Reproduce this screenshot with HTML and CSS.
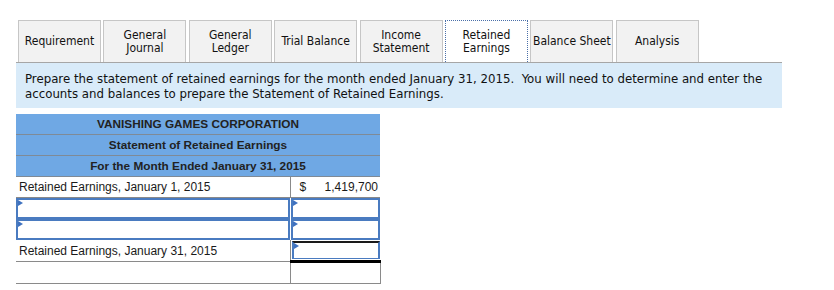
FILE: index.html
```html
<!DOCTYPE html>
<html>
<head>
<meta charset="utf-8">
<link rel="stylesheet" href="styles.css">
</head>
<body>
<div class="page">
  <div class="tabs">
    <div class="tab">Requirement</div>
    <div class="tab">General<br>Journal</div>
    <div class="tab">General<br>Ledger</div>
    <div class="tab">Trial Balance</div>
    <div class="tab">Income<br>Statement</div>
    <div class="tab active">Retained<br>Earnings</div>
    <div class="tab">Balance Sheet</div>
    <div class="tab">Analysis</div>
  </div>
  <div class="instructions">Prepare the statement of retained earnings for the month ended January 31, 2015.&nbsp; You will need to determine and enter the accounts and balances to prepare the Statement of Retained Earnings.</div>
  <table class="stmt">
    <colgroup><col class="c1"><col class="c2"></colgroup>
    <tr class="hdr"><td colspan="2">VANISHING GAMES CORPORATION</td></tr>
    <tr class="hdr"><td colspan="2">Statement of Retained Earnings</td></tr>
    <tr class="hdr"><td colspan="2">For the Month Ended January 31, 2015</td></tr>
    <tr class="row">
      <td class="label">Retained Earnings, January 1, 2015</td>
      <td class="amt"><span class="cur">$</span><span class="num">1,419,700</span></td>
    </tr>
    <tr class="inrow">
      <td><div class="field left"><span class="tri"></span></div></td>
      <td><div class="field right"><span class="tri"></span></div></td>
    </tr>
    <tr class="inrow">
      <td><div class="field left"><span class="tri"></span></div></td>
      <td><div class="field right"><span class="tri"></span></div></td>
    </tr>
    <tr class="row total">
      <td class="label">Retained Earnings, January 31, 2015</td>
      <td class="totcell"><div class="field right tot"><span class="tri"></span></div></td>
    </tr>
    <tr class="row last">
      <td></td>
      <td class="amt"></td>
    </tr>
  </table>
</div>
</body>
</html>
```
FILE: styles.css
```css
html, body {
  margin: 0;
  padding: 0;
  background: #ffffff;
}
.page {
  padding: 20px 0 0 16px;
  width: 766px;
}
.tabs {
  display: flex;
  gap: 2.4px;
  padding-left: 2px;
  border-bottom: 1px solid #a6a6a6;
}
.tab {
  box-sizing: border-box;
  width: 83px;
  height: 42px;
  border: 1px solid #c6c6c6;
  border-bottom: none;
  background: #f2f2f2;
  display: flex;
  align-items: center;
  justify-content: center;
  text-align: center;
  font-family: "DejaVu Sans Condensed", "DejaVu Sans", sans-serif;
  font-size: 12px;
  line-height: 13px;
  color: #111;
}
.tab.active {
  background: #ffffff;
  border: 1px dotted #4a6fa8;
  border-bottom: none;
}
.instructions {
  background: #d9ebf9;
  padding: 8px 9px 7px 9px;
  font-family: "DejaVu Sans Condensed", "DejaVu Sans", sans-serif;
  font-size: 13.1px;
  line-height: 15px;
  color: #111;
}
.stmt {
  margin-top: 6px;
  border-collapse: collapse;
  table-layout: fixed;
  width: 364px;
  font-family: "Liberation Sans", Arial, sans-serif;
  font-size: 12px;
  color: #1a1a1a;
}
.c1 { width: 274px; }
.c2 { width: 90px; }
.stmt td {
  padding: 0;
  height: 20px;
}
.hdr td {
  background: #6fa8e4;
  text-align: center;
  font-weight: bold;
  font-size: 11.8px;
  color: #222;
  border-bottom: 1px solid #7f8a96;
}
.row td {
  border-bottom: 1px solid #8a8a8a;
}
.label {
  padding-left: 3px !important;
}
.amt {
  border-left: 1px solid #8a8a8a;
}
.amt .cur {
  float: left;
  padding-left: 9px;
}
.amt .num {
  float: right;
  padding-right: 2px;
}
.inrow td {
  height: 21px;
}
.field {
  box-sizing: border-box;
  height: 21px;
  border: 2px solid #4a7bc0;
  position: relative;
  background: #fff;
}
.field.right {
  margin-left: 1px;
}
.tri {
  position: absolute;
  left: 0;
  top: 0;
  width: 0;
  height: 0;
  border-top: 3px solid transparent;
  border-bottom: 3px solid transparent;
  border-left: 5px solid #3f72c0;
}
.total td.totcell {
  border-left: 1px solid #8a8a8a;
  border-bottom: 3px solid #000;
}
.field.tot {
  border-top: 2px solid #1a1a1a;
  border-bottom: none;
  height: 18px;
  box-shadow: inset 0 -1px 0 #4a7bc0;
}
.last td.amt {
  border-right: 1px solid #8a8a8a;
}
```
